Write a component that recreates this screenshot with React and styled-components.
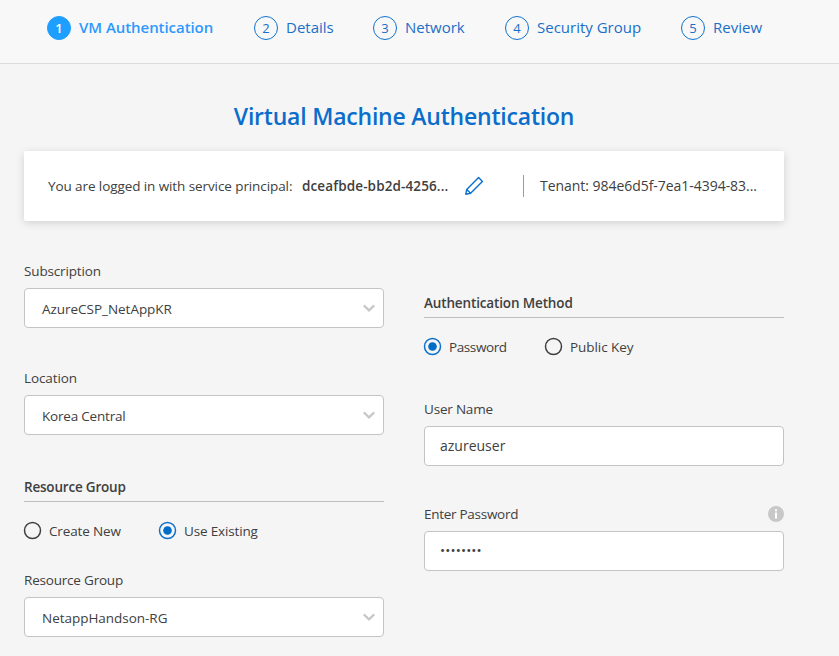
import React from "react";
import styled, { createGlobalStyle } from "styled-components";

const GlobalStyle = createGlobalStyle`
  * { box-sizing: border-box; }
  body {
    margin: 0;
    background: #f5f5f5;
    color: #404040;
    font-family: "Open Sans", "Noto Sans", sans-serif;
    font-size: 13.5px;
    overflow: hidden;
  }
`;

const Page = styled.div`
  width: 839px;
  height: 656px;
  overflow: hidden;
`;

const StepBar = styled.nav`
  display: flex;
  gap: 40px;
  height: 64px;
  padding: 16px 0 0 47px;
  background: #f8f8f8;
  border-bottom: 1px solid #dcdcdc;
`;

const Step = styled.div`
  display: flex;
  align-items: center;
  gap: 8px;
  height: 24px;
  color: ${(p) => (p.$active ? "#2d98ff" : "#1a6fc9")};
`;

const StepNumber = styled.span`
  display: flex;
  align-items: center;
  justify-content: center;
  width: 24px;
  height: 24px;
  border-radius: 50%;
  border: 1px solid ${(p) => (p.$active ? "#1e9fff" : "#0f73cd")};
  background: ${(p) => (p.$active ? "#1e9fff" : "transparent")};
  color: ${(p) => (p.$active ? "#fff" : "#1a6fc9")};
  font-size: 13px;
  font-weight: ${(p) => (p.$active ? 600 : 400)};
`;

const StepLabel = styled.span`
  width: ${(p) => p.$width}px;
  padding-bottom: 2px;
  font-size: 15px;
  line-height: 22px;
  white-space: nowrap;
  font-weight: ${(p) => (p.$active ? 600 : 400)};
  letter-spacing: ${(p) => (p.$active ? -0.06 : 0)}px;
`;

const Content = styled.main`
  width: 760px;
  margin-left: 24px;
`;

const Title = styled.h1`
  margin: 0;
  padding-top: 35px;
  height: 87px;
  color: #0b6dcb;
  font-size: 23px;
  line-height: 34px;
  font-weight: 600;
  letter-spacing: -0.21px;
  text-align: center;
  white-space: nowrap;
`;

const AccountCard = styled.section`
  display: flex;
  align-items: center;
  height: 70px;
  padding: 0 24px;
  background: #fff;
  border-radius: 2px;
  box-shadow: 0 2px 8px rgba(0, 0, 0, 0.15);
`;

const Text = styled.span`
  font-size: ${(p) => p.$size || 13.5}px;
  font-weight: ${(p) => (p.$bold ? 600 : 400)};
  letter-spacing: ${(p) => p.$track || 0}px;
  width: ${(p) => (p.$width ? `${p.$width}px` : "auto")};
  line-height: 20px;
  white-space: nowrap;
`;

const EditIcon = styled.svg`
  width: 20px;
  height: 20px;
  margin-left: 8px;
`;

const Divider = styled.span`
  width: 1px;
  height: 22px;
  margin: 0 16px 0 39px;
  background: #9b9b9b;
`;

const Columns = styled.div`
  display: grid;
  grid-template-columns: 360px 360px;
  gap: 40px;
  padding-top: 40px;
`;

const Column = styled.div`
  display: flex;
  flex-direction: column;
  padding-top: ${(p) => p.$top || 0}px;
`;

const Field = styled.div`
  display: flex;
  flex-direction: column;
  gap: 7px;
  margin-top: ${(p) => p.$top || 0}px;
`;

const LabelRow = styled.div`
  display: flex;
  justify-content: space-between;
  align-items: center;
  height: 20px;
`;

const Control = styled.div`
  display: flex;
  align-items: center;
  justify-content: space-between;
  height: 40px;
  padding: 0 8px 0 ${(p) => (p.$select ? 17 : 15)}px;
  background: #fff;
  border: 1px solid #c4c4c4;
  border-radius: 4px;
`;

const SelectValue = styled(Text)`
  padding-top: 2px;
`;

const PasswordText = styled(Text)`
  padding-bottom: 2px;
`;

const Chevron = styled.svg`
  width: 12px;
  height: 8px;
`;

const SectionHead = styled.div`
  display: flex;
  align-items: flex-start;
  height: 25px;
  margin-top: ${(p) => p.$top || 0}px;
  border-bottom: 1px solid #bebebe;
`;

const Radios = styled.div`
  display: flex;
  align-items: center;
  height: 20px;
  margin-top: 19px;
`;

const Radio = styled.div`
  display: flex;
  align-items: center;
  gap: 8px;
  width: ${(p) => p.$width || 120}px;
`;

const RadioIcon = styled.svg`
  width: 17px;
  height: 18px;
  flex: none;
  overflow: visible;
`;

const InfoIcon = styled.svg`
  width: 16px;
  height: 16px;
`;

const steps = [
  { label: "VM Authentication", width: 135, active: true },
  { label: "Details", width: 47 },
  { label: "Network", width: 60 },
  { label: "Security Group", width: 104 },
  { label: "Review", width: 50 },
];

function RadioOption({ label, checked, width, track }) {
  return (
    <Radio $width={width}>
      <RadioIcon viewBox="0 0 17 18">
        <circle cx="8.5" cy="8.5" r="8" fill="none" stroke={checked ? "#0c70cc" : "#404040"} strokeWidth="1.5" />
        {checked && <circle cx="8.5" cy="8.5" r="4.3" fill="#006dc9" />}
      </RadioIcon>
      <Text $track={track}>{label}</Text>
    </Radio>
  );
}

function SelectField({ label, value, top, labelTrack, valueTrack }) {
  return (
    <Field $top={top}>
      <LabelRow><Text $track={labelTrack}>{label}</Text></LabelRow>
      <Control $select>
        <SelectValue $track={valueTrack}>{value}</SelectValue>
        <Chevron viewBox="0 0 12 8">
          <path d="M0.8 1.4 L6 6.4 L11.2 1.4" fill="none" stroke="#c8c8c8" strokeWidth="2.2" />
        </Chevron>
      </Control>
    </Field>
  );
}

export default function App() {
  return (
    <Page>
      <GlobalStyle />
      <StepBar>
        {steps.map((s, i) => (
          <Step key={s.label} $active={s.active}>
            <StepNumber $active={s.active}>{i + 1}</StepNumber>
            <StepLabel $active={s.active} $width={s.width}>{s.label}</StepLabel>
          </Step>
        ))}
      </StepBar>
      <Content>
        <Title>Virtual Machine Authentication</Title>
        <AccountCard>
          <Text $width={254} $track={-0.09}>You are logged in with service principal:</Text>
          <Text $bold $width={154} $track={0.12}>dceafbde-bb2d-4256...</Text>
          <EditIcon viewBox="0 0 20 20" fill="none" stroke="#0b70cc" strokeWidth="1.4" strokeLinejoin="round">
            <path d="M1.8 18.2 L2.7 13.4 L14.6 1.6 L18.4 5.4 L6.6 17.2 Z M2.7 13.4 L6.6 17.2" />
          </EditIcon>
          <Divider />
          <Text $size={14} $track={-0.04}>Tenant: 984e6d5f-7ea1-4394-83...</Text>
        </AccountCard>
        <Columns>
          <Column>
            <SelectField label="Subscription" value="AzureCSP_NetAppKR" labelTrack={-0.15} valueTrack={-0.03} />
            <SelectField label="Location" value="Korea Central" top={40} labelTrack={-0.1} valueTrack={-0.2} />
            <SectionHead $top={42}><Text $bold $track={-0.2}>Resource Group</Text></SectionHead>
            <Radios>
              <RadioOption label="Create New" width={135} track={-0.15} />
              <RadioOption label="Use Existing" checked track={-0.15} />
            </Radios>
            <SelectField label="Resource Group" value="NetappHandson-RG" top={29} labelTrack={-0.2} valueTrack={-0.03} />
          </Column>
          <Column $top={32}>
            <SectionHead><Text $bold $track={-0.14}>Authentication Method</Text></SectionHead>
            <Radios>
              <RadioOption label="Password" checked width={121} track={-0.4} />
              <RadioOption label="Public Key" track={-0.05} />
            </Radios>
            <Field $top={42}>
              <LabelRow><Text $track={-0.2}>User Name</Text></LabelRow>
              <Control><Text $size={14}>azureuser</Text></Control>
            </Field>
            <Field $top={38}>
              <LabelRow>
                <Text $track={-0.28}>Enter Password</Text>
                <InfoIcon viewBox="0 0 16 16">
                  <circle cx="8" cy="8" r="8" fill="#c8c8c8" />
                  <path d="M7 3.2h2v2H7zM7 6.4h2v6H7z" fill="#fff" />
                </InfoIcon>
              </LabelRow>
              <Control><PasswordText $track={0.15}>••••••••</PasswordText></Control>
            </Field>
          </Column>
        </Columns>
      </Content>
    </Page>
  );
}
